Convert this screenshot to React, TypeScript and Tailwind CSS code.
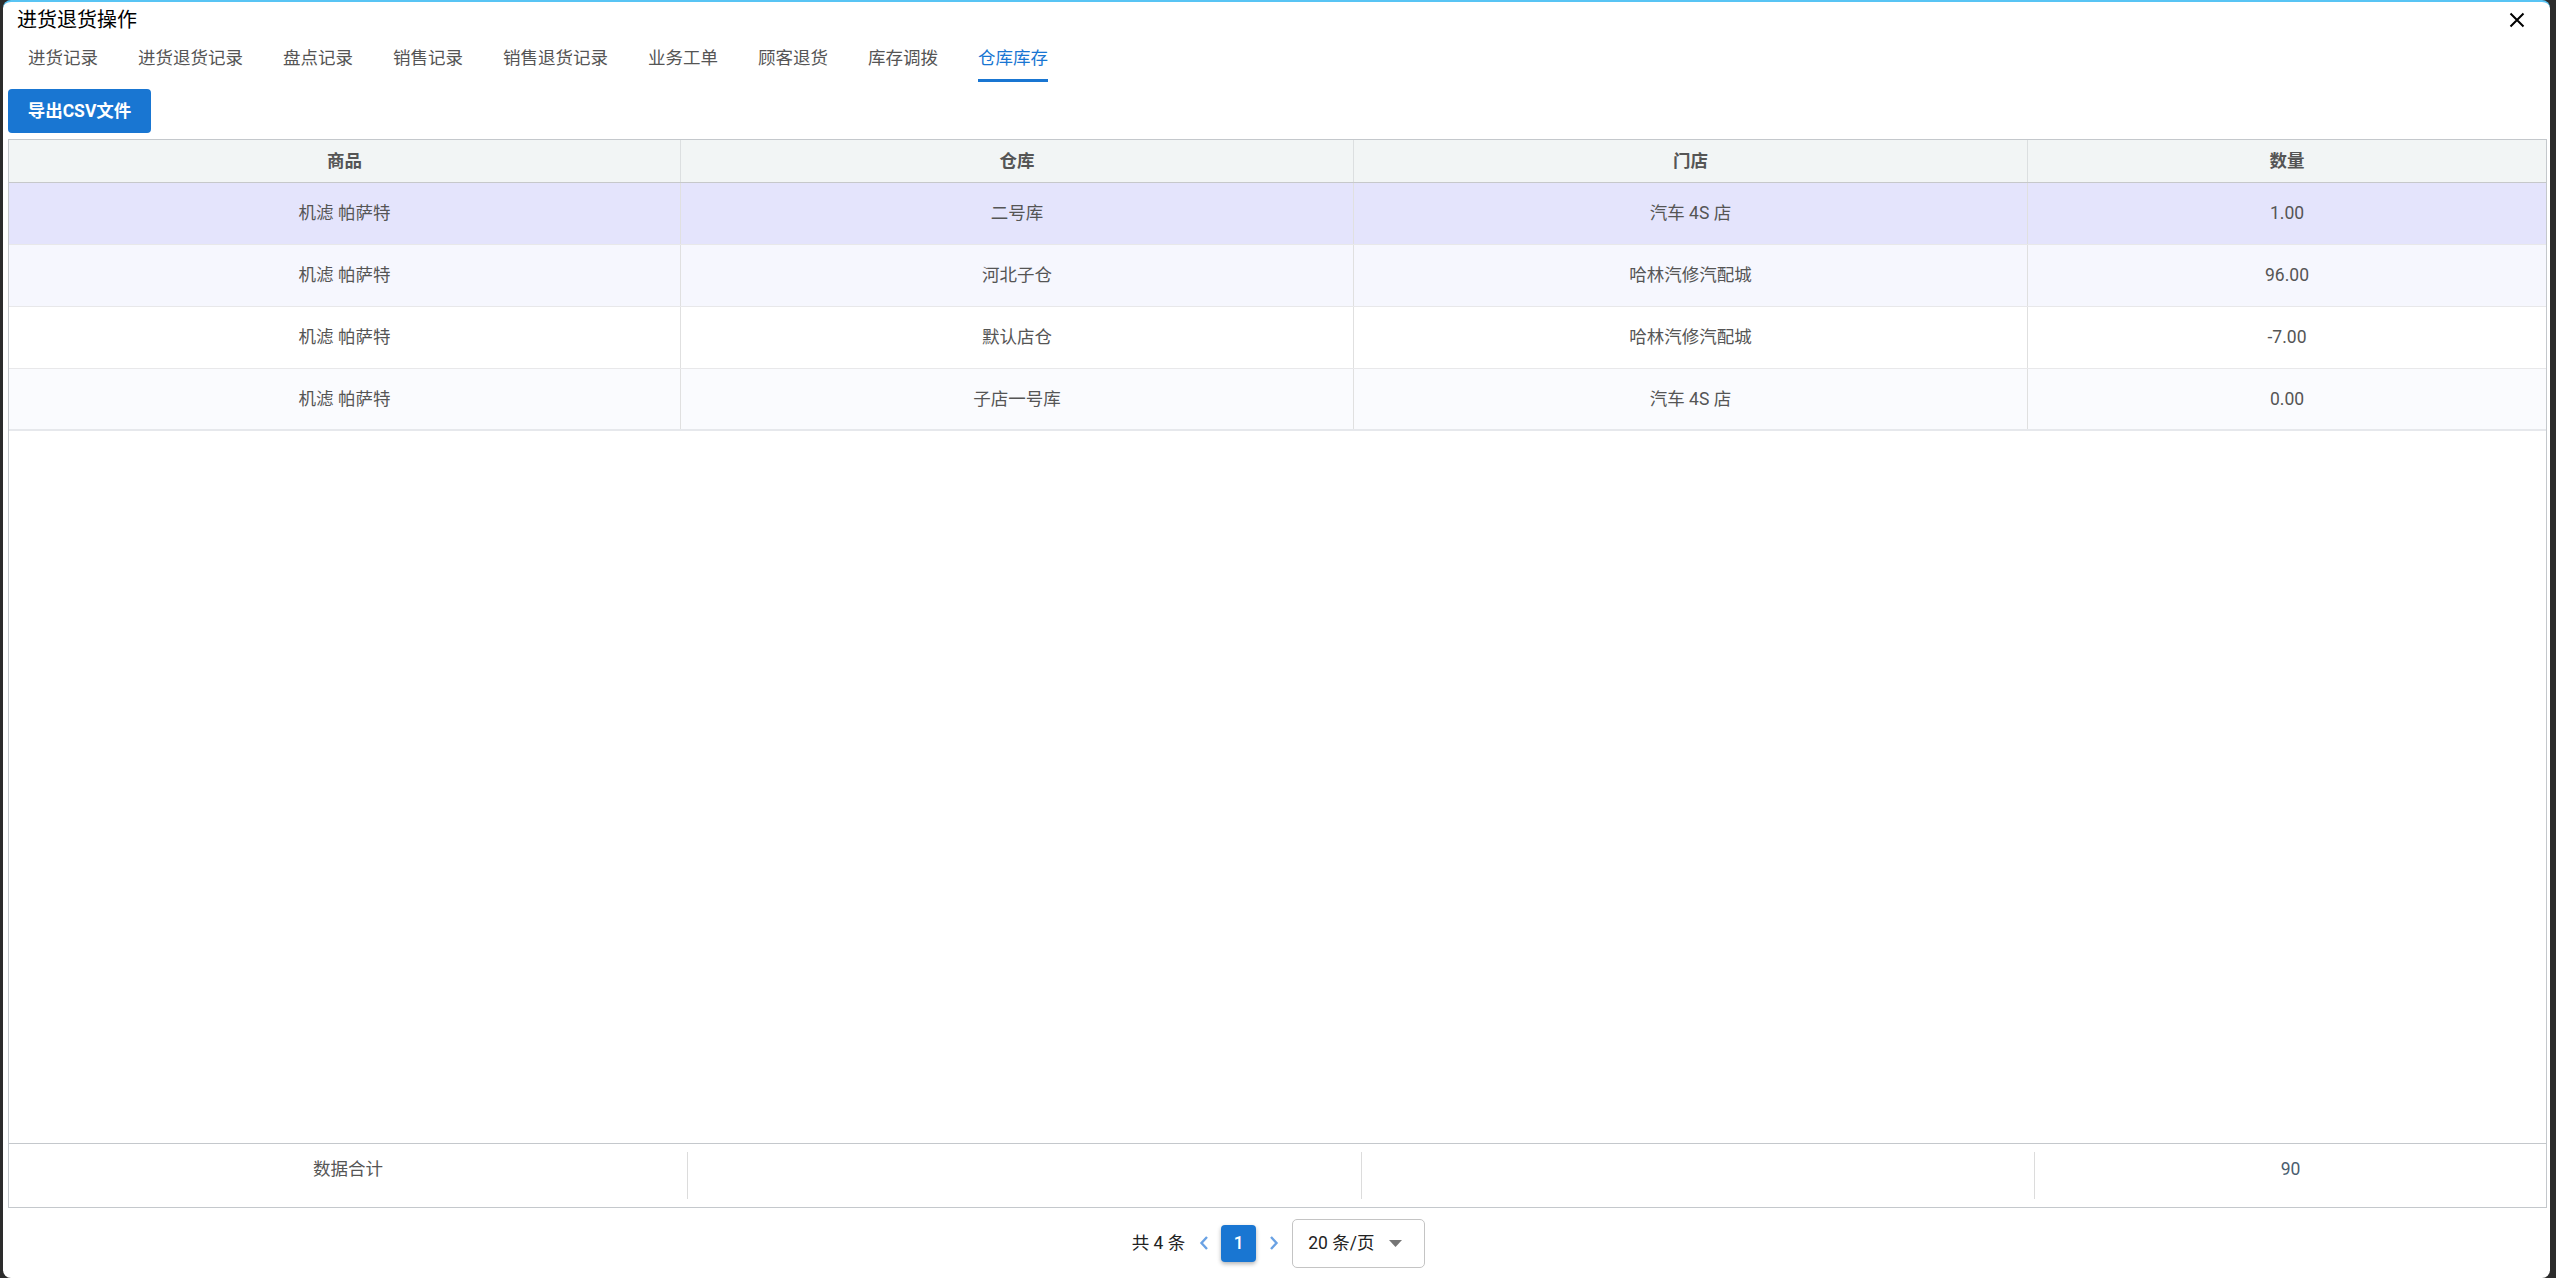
import React from "react";

const font = { fontFamily: 'Roboto, "Noto Sans CJK SC", "Noto Sans", sans-serif' };

const tabs = ["进货记录", "进货退货记录", "盘点记录", "销售记录", "销售退货记录", "业务工单", "顾客退货", "库存调拨", "仓库库存"];

const rows = [
  { c: ["机滤 帕萨特", "二号库", "汽车 4S 店", "1.00"], bg: "bg-[#e4e4fc]" },
  { c: ["机滤 帕萨特", "河北子仓", "哈林汽修汽配城", "96.00"], bg: "bg-[#f6f7fe]" },
  { c: ["机滤 帕萨特", "默认店仓", "哈林汽修汽配城", "-7.00"], bg: "bg-white" },
  { c: ["机滤 帕萨特", "子店一号库", "汽车 4S 店", "0.00"], bg: "bg-[#fafbfe]" },
];

export default function App() {
  return (
    <div className="h-screen w-full bg-[#2c2c2c] flex" style={font}>
      <div className="ml-[3px] mr-[6px] flex-1 flex flex-col bg-white rounded-[8px] border-t-[2px] border-[#58c4f4] overflow-hidden">
        {/* title bar */}
        <div className="h-[36px] flex items-center justify-between pl-[14px] pr-[25px] shrink-0">
          <div className="text-[20px] text-black leading-none">进货退货操作</div>
          <svg width="16" height="16" viewBox="0 0 16 16" className="text-black">
            <path d="M1.5 1.5 L14.5 14.5 M14.5 1.5 L1.5 14.5" stroke="currentColor" strokeWidth="2" fill="none" />
          </svg>
        </div>
        {/* tabs */}
        <div className="h-[44px] flex pl-[5px] shrink-0">
          {tabs.map((t, i) => {
            const active = i === tabs.length - 1;
            return (
              <div key={t} className="px-[20px] flex flex-col">
                <div className={`flex-1 flex items-center text-[17.5px] ${active ? "text-[#1976d2]" : "text-[#555]"}`}>{t}</div>
                <div className={`h-[3px] ${active ? "bg-[#1976d2]" : "bg-transparent"}`} />
              </div>
            );
          })}
        </div>
        {/* export button */}
        <div className="pl-[5px] pt-[7px] shrink-0">
          <div className="w-[143px] h-[44px] rounded-[4px] bg-[#1976d2] text-white font-bold text-[17.5px] flex items-center justify-center">
            导出CSV文件
          </div>
        </div>
        {/* table */}
        <div className="ml-[5px] mr-[3px] mt-[6px] flex-1 flex flex-col border border-[#c4c8cc] min-h-0">
          <div className="grid grid-cols-[672px_673px_674px_1fr] h-[43px] bg-[#f2f5f5] border-b border-[#c6c8ca] shrink-0">
            {["商品", "仓库", "门店", "数量"].map((h, i) => (
              <div key={h} className={`flex items-center justify-center font-bold text-[17.5px] text-[#555] ${i < 3 ? "border-r border-[#dcdfe0]" : ""}`}>
                {h}
              </div>
            ))}
          </div>
          {rows.map((r, ri) => (
            <div key={ri} className={`grid grid-cols-[672px_673px_674px_1fr] h-[62px] ${r.bg} ${ri === rows.length - 1 ? "border-b-[2px] border-[#e6e8ec]" : "border-b border-[#e8e8ea]"} shrink-0`}>
              {r.c.map((c, i) => (
                <div key={i} className={`flex items-center justify-center text-[17.5px] text-[#555] ${i < 3 ? "border-r border-[#e0e0e0]" : ""}`}>
                  {c}
                </div>
              ))}
            </div>
          ))}
          <div className="flex-1" />
          <div className="grid grid-cols-[679px_674px_673px_1fr] h-[64px] border-t border-[#c4c8cc] shrink-0">
            <div className="my-[8px] border-r border-[#dcdcdc] flex justify-center pt-[4px] text-[17.5px] text-[#555]">数据合计</div>
            <div className="my-[8px] border-r border-[#dcdcdc]" />
            <div className="my-[8px] border-r border-[#dcdcdc]" />
            <div className="my-[8px] flex justify-center pt-[4px] text-[17.5px] text-[#4a5d70]">90</div>
          </div>
        </div>
        {/* pagination */}
        <div className="h-[70px] shrink-0 flex items-center justify-center pl-[4px]">
          <div className="flex items-center">
            <span className="text-[17.5px] text-[#222]">共 4 条</span>
            <svg width="10" height="16" viewBox="0 0 10 16" className="ml-[14px]">
              <path d="M8 2 L2.5 8 L8 14" stroke="#6aa2e4" strokeWidth="2.4" fill="none" />
            </svg>
            <div className="ml-[12px] w-[35px] h-[37px] rounded-[4px] bg-[#1976d2] text-white text-[17.5px] font-medium flex items-center justify-center shadow-[0_2px_4px_rgba(0,0,0,0.3)]">
              1
            </div>
            <svg width="10" height="16" viewBox="0 0 10 16" className="ml-[13px]">
              <path d="M2 2 L7.5 8 L2 14" stroke="#6aa2e4" strokeWidth="2.4" fill="none" />
            </svg>
            <div className="ml-[13px] w-[133px] h-[49px] rounded-[5px] border border-[#c4c4c4] flex items-center pl-[15px] pr-[22px] justify-between">
              <span className="text-[17.5px] text-[#222]">20 条/页</span>
              <svg width="13" height="7" viewBox="0 0 13 7">
                <path d="M0 0 L13 0 L6.5 7 Z" fill="#757575" />
              </svg>
            </div>
          </div>
        </div>
      </div>
    </div>
  );
}
